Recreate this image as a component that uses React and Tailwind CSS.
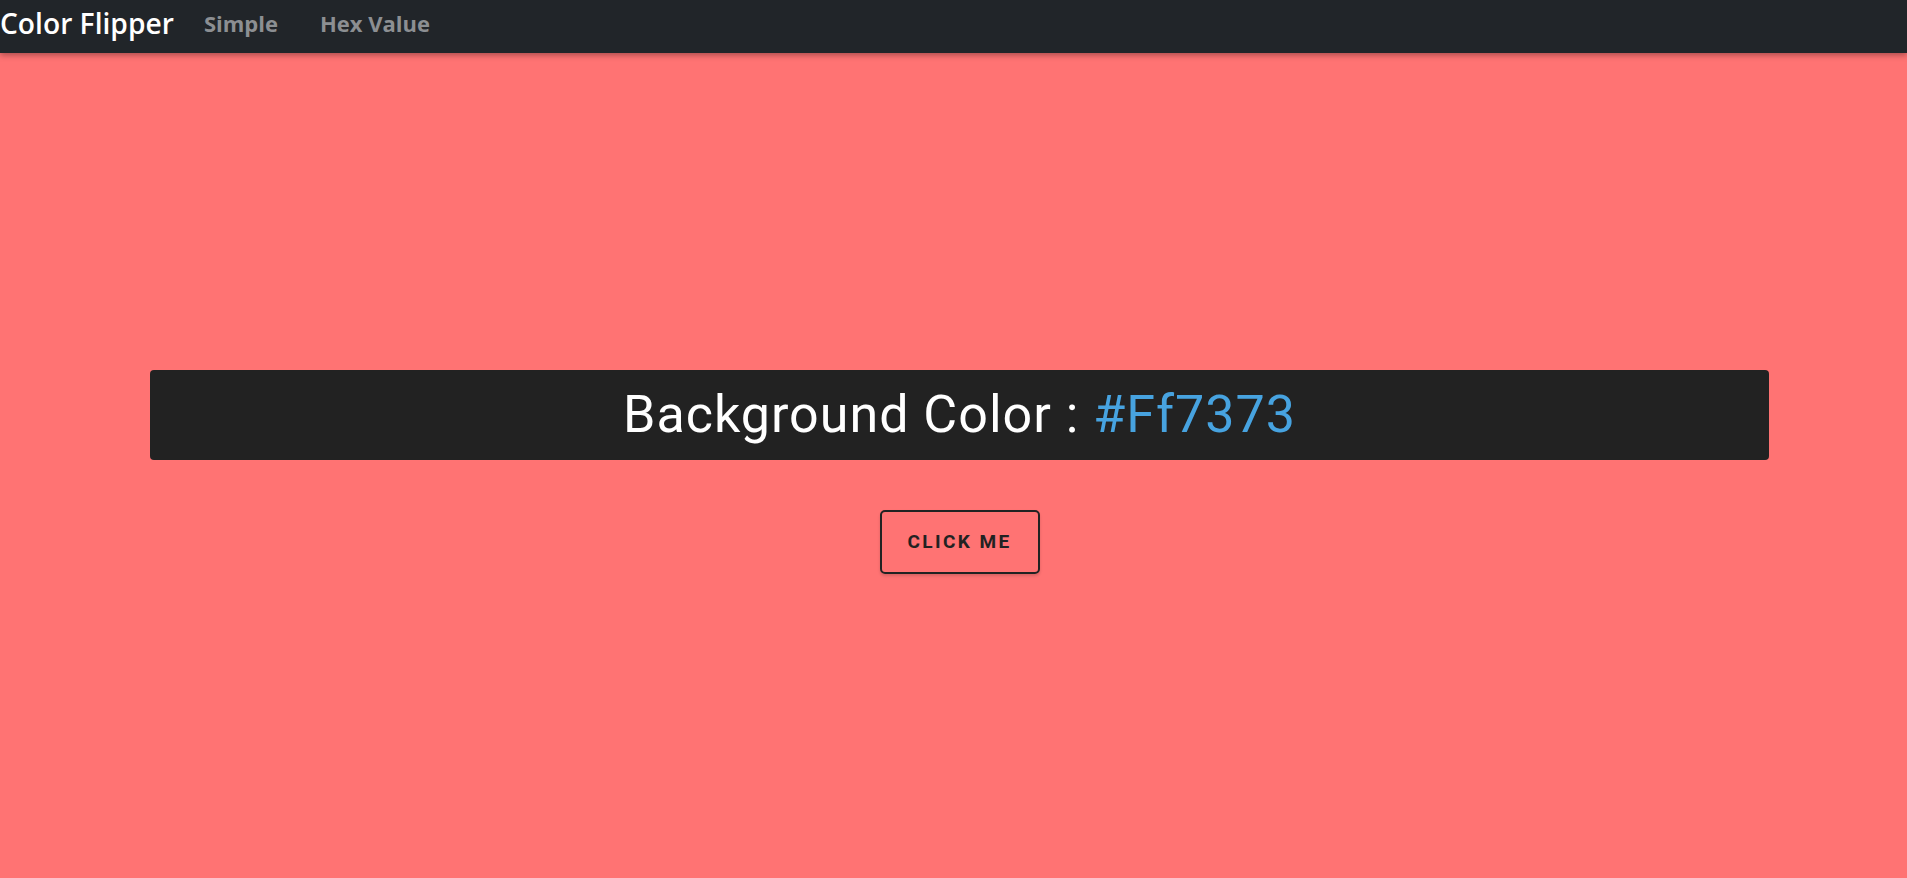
import React, { useState } from "react";

const colors = ["#Ff7373", "#47a3e0", "#f1c40f", "#2ecc71", "#9b59b6"];

const App = () => {
  const [color, setColor] = useState(colors[0]);

  const handleClick = () => {
    const next = colors[Math.floor(Math.random() * colors.length)];
    setColor(next);
  };

  return (
    <div className="min-h-screen bg-[#ff7373] flex flex-col">
      {/* Navbar */}
      <nav className="h-[53px] pb-[7px] bg-[#212529] flex items-center shadow-[0_2px_6px_rgba(0,0,0,0.35)] relative z-10 font-['Open_Sans',sans-serif]">
        <span className="text-white font-semibold text-[28.2px] leading-none">
          Color Flipper
        </span>
        <a href="#" className="ml-[30px] text-[#8c8f92] font-bold text-[22px] leading-none">
          Simple
        </a>
        <a href="#" className="ml-[42px] text-[#8c8f92] font-bold text-[22px] leading-none">
          Hex Value
        </a>
      </nav>

      {/* Main */}
      <main className="flex-1 flex flex-col justify-center items-center pl-[150px] pr-[138px] pt-[13px] font-['Roboto',sans-serif]">
        <div className="w-full h-[90px] bg-[#222222] rounded-[4px] flex items-center justify-center">
          <h2 className="text-white text-[52px] font-normal leading-none tracking-[1px]">
            Background Color : <span style={{ color: "#47a3e0" }}>{color}</span>
          </h2>
        </div>

        <button
          onClick={handleClick}
          className="mt-[50px] w-[160px] h-[64px] border-2 border-[#222222] rounded-[5px] text-[#222222] font-bold text-[19px] tracking-[2.4px] shadow-[0_2px_3px_rgba(0,0,0,0.15)]"
        >
          CLICK ME
        </button>
      </main>
    </div>
  );
};

export default App;
